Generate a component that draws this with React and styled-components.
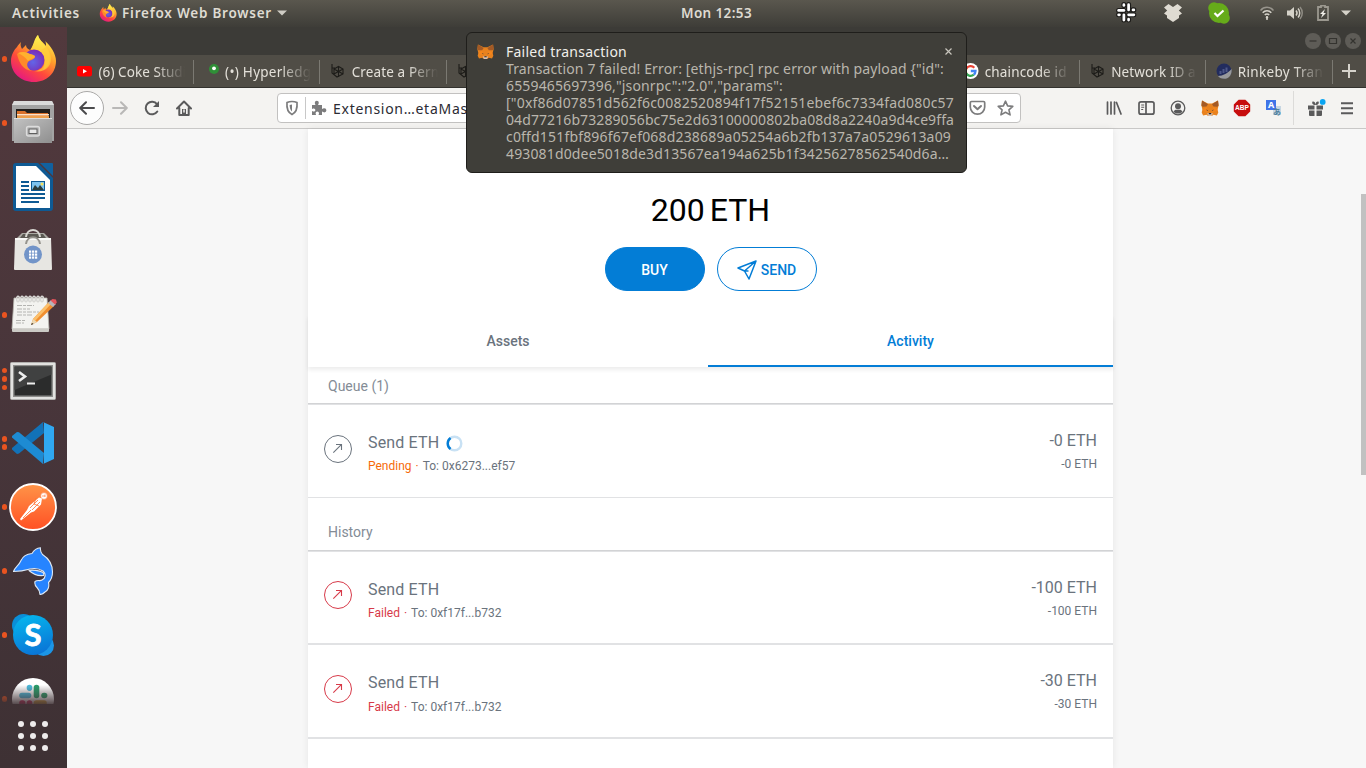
import React, { useLayoutEffect, useRef, useState } from "react";
import styled, { createGlobalStyle, css } from "styled-components";

const uiFont = '"Noto Sans", "Open Sans", sans-serif';
const appFont = 'Roboto, "Liberation Sans", sans-serif';

const GlobalStyle = createGlobalStyle`
  * { box-sizing: border-box; }
  body { margin: 0; overflow: hidden; background: #3c3b37; }
  svg { display: block; flex: none; }
`;

/* ---------- text tracked to a given line width ---------- */

const TrackedSpan = styled.span`
  display: inline-block;
  white-space: pre;
  flex: none;
`;

function Tracked({ width, children }) {
  const ref = useRef(null);
  const [spacing, setSpacing] = useState(0);
  useLayoutEffect(() => {
    const natural = ref.current.getBoundingClientRect().width;
    setSpacing((width - natural) / Array.from(children).length);
  }, [width, children]);
  return (
    <TrackedSpan ref={ref} style={{ letterSpacing: `${spacing}px` }}>
      {children}
    </TrackedSpan>
  );
}

/* ---------- desktop shell ---------- */

const Desktop = styled.div`
  position: relative;
  width: 1366px;
  height: 768px;
  overflow: hidden;
  display: flex;
  flex-direction: column;
  font-family: ${uiFont};
`;

const TopBar = styled.header`
  flex: none;
  height: 27px;
  display: grid;
  grid-template-columns: 1fr auto 1fr;
  align-items: center;
  padding: 0 0 2px 67px;
  background: linear-gradient(#5a574e, #3e3d38);
  color: #dfdbd2;
  font-size: 13.5px;
  font-weight: 600;
  line-height: 24px;
`;

const TopLeft = styled.div`
  display: flex;
  align-items: center;
  margin-left: -67px;
  padding-left: 12px;
`;

const AppMenu = styled.div`
  display: flex;
  align-items: center;
  margin-left: 19px;
  gap: 5px;
`;

const TopRight = styled.div`
  display: flex;
  align-items: center;
  justify-content: flex-end;
  padding-right: 15px;
`;

const TrayItem = styled.span`
  display: flex;
  margin-left: ${(p) => p.$gap}px;
`;

const Workspace = styled.div`
  flex: 1;
  min-height: 0;
  display: flex;
`;

/* ---------- dock ---------- */

const Dock = styled.nav`
  flex: none;
  width: 67px;
  display: flex;
  flex-direction: column;
  background: linear-gradient(#52393d, #47353a 55%, #3e3134);
`;

const DockList = styled.div`
  flex: none;
  height: 677px;
  overflow: hidden;
`;

const DockSlot = styled.div`
  height: 64px;
  display: grid;
  grid-template-columns: 9px 48px;
  align-items: center;
  ${(p) =>
    p.$fading &&
    css`
      mask-image: linear-gradient(#000 18px, rgba(0, 0, 0, 0.12) 37px);
    `}
`;

const Dots = styled.div`
  display: flex;
  flex-direction: column;
  align-items: center;
  gap: 2.8px;
`;

const Dot = styled.i`
  width: 5.6px;
  height: 5.6px;
  border-radius: 50%;
  background: #e95420;
`;

const AppsGrid = styled.div`
  display: grid;
  grid-template-columns: repeat(3, 6px);
  gap: 6px;
  padding: 17px 0 0 18px;
`;

const AppsDot = styled.i`
  width: 6px;
  height: 6px;
  border-radius: 50%;
  background: #eeecec;
`;

/* ---------- browser window ---------- */

const Browser = styled.main`
  flex: 1;
  min-width: 0;
  display: flex;
  flex-direction: column;
`;

const TitleBar = styled.div`
  flex: none;
  height: 28px;
  display: flex;
  justify-content: flex-end;
  align-items: center;
  gap: 4px;
  padding-right: 5px;
  background: #3c3b37;
`;

const WindowButton = styled.span`
  width: 16px;
  height: 16px;
  border-radius: 50%;
  background: #5e5c57;
  display: flex;
  align-items: center;
  justify-content: center;
`;

const TabStrip = styled.div`
  flex: none;
  height: 33px;
  display: flex;
  background: #504d46;
  border-bottom: 1px solid #33322e;
`;

const Tab = styled.div`
  flex: none;
  width: 126.6px;
  display: flex;
  align-items: center;
  padding-left: 10px;
  position: relative;
  &::after {
    content: "";
    position: absolute;
    right: 0;
    top: 5px;
    width: 1px;
    height: 24px;
    background: #7b7972;
  }
`;

const Favicon = styled.span`
  width: 16px;
  margin-right: 5.500px;
  display: flex;
  flex: none;
`;

const TabTitle = styled.span`
  width: 86px;
  padding-top: 2px;
  overflow: hidden;
  white-space: nowrap;
  font-size: 13.5px;
  line-height: 30px;
  color: #e3e0d9;
  mask-image: linear-gradient(90deg, #000 56px, transparent 86px);
`;

const NewTab = styled.div`
  flex: 1;
  display: flex;
  align-items: center;
  justify-content: center;
`;

const Toolbar = styled.div`
  flex: none;
  height: 41px;
  display: flex;
  align-items: center;
  background: #f4f3f1;
  border-bottom: 1px solid #c9c8c7;
  padding-left: 3px;
`;

const BackButton = styled.span`
  width: 34px;
  height: 34px;
  border: 1px solid #aaa9a8;
  border-radius: 50%;
  background: #fdfdfd;
  display: flex;
  align-items: center;
  justify-content: center;
`;

const NavIcon = styled.span`
  display: flex;
  margin-left: ${(p) => p.$gap}px;
`;

const UrlBar = styled.div`
  width: 744px;
  height: 30px;
  margin-left: 85px;
  display: flex;
  align-items: center;
  padding: 0 6px 0 6px;
  border: 1px solid #c2c1c0;
  border-radius: 4px;
  background: #fff;
  color: #2b2b33;
  font-size: 14px;
`;

const UrlDivider = styled.span`
  width: 1px;
  height: 22px;
  margin: 0 5px;
  background: #c8c8c8;
`;

const UrlText = styled.span`
  flex: 1;
  margin-left: 5px;
  display: flex;
`;

const ToolDivider = styled.span`
  width: 1px;
  height: 34px;
  margin-left: 10px;
  background: #dcdbd9;
`;

const Page = styled.div`
  flex: 1;
  min-height: 0;
  position: relative;
  display: flex;
  background: #f7f7f7;
  padding-left: 241px;
  font-family: ${appFont};
`;

const ScrollThumb = styled.div`
  position: absolute;
  right: 0;
  top: 65px;
  width: 5px;
  height: 281px;
  background: #c1c1c1;
`;

const Wallet = styled.section`
  width: 805px;
  background: #fff;
  box-shadow: 0 0 7px rgba(0, 0, 0, 0.08);
`;

const Balance = styled.div`
  padding-top: 61px;
  height: 101px;
  display: flex;
  justify-content: center;
  gap: 5px;
  font-size: 32px;
  line-height: 41px;
  color: #000;
`;

const Actions = styled.div`
  display: flex;
  justify-content: center;
  gap: 12px;
  margin-top: 17px;
  padding-left: 1px;
`;

const PillButton = styled.button`
  width: 100px;
  height: 44px;
  padding: 1px 1px 0 0;
  border-radius: 22px;
  border: 1px solid #037dd6;
  display: flex;
  align-items: center;
  justify-content: center;
  gap: 4px;
  font-family: ${appFont};
  font-size: 14px;
  font-weight: 500;
  background: ${(p) => (p.$primary ? "#037dd6" : "#fff")};
  color: ${(p) => (p.$primary ? "#fff" : "#037dd6")};
`;

const WalletTabs = styled.div`
  display: grid;
  grid-template-columns: 400px 405px;
  height: 52px;
  margin-top: 24px;
  box-shadow: 0 3px 4px rgba(0, 0, 0, 0.07);
`;

const WalletTab = styled.div`
  height: 52px;
  text-align: center;
  font-size: 14px;
  font-weight: 500;
  line-height: 52px;
  color: ${(p) => (p.$active ? "#037dd6" : "#6a737d")};
  border-bottom: 2px solid ${(p) => (p.$active ? "#037dd6" : "transparent")};
`;

const ListHeader = styled.div`
  height: ${(p) => p.$height}px;
  padding: 0 0 ${(p) => p.$bottom}px 20px;
  display: flex;
  align-items: flex-end;
  font-size: 14px;
  line-height: 18px;
  color: #848c96;
  border-bottom: 1px solid #d2d3d5;
`;

const TxRow = styled.div`
  height: ${(p) => p.$height}px;
  border-top: 1px solid #e1e2e4;
  border-bottom: 1px solid #e1e2e4;
  display: grid;
  grid-template-columns: 28px 1fr auto;
  column-gap: 16px;
  padding: 0 16px;
  color: #6a737d;
`;

const TxIcon = styled.span`
  margin-top: ${(p) => p.$top}px;
  width: 28px;
  height: 28px;
  color: ${(p) => (p.$failed ? "#d73a49" : "#6a737d")};
`;

const TxText = styled.div`
  padding-top: ${(p) => p.$top}px;
  text-align: ${(p) => (p.$right ? "right" : "left")};
`;

const TxTitle = styled.div`
  display: flex;
  align-items: center;
  justify-content: ${(p) => (p.$right ? "flex-end" : "flex-start")};
  gap: 7px;
  font-size: 16px;
  line-height: 20px;
  letter-spacing: ${(p) => (p.$right ? 0 : 0.15)}px;
`;

const TxSub = styled.div`
  margin-top: ${(p) => p.$top}px;
  font-size: 12px;
  line-height: 16px;
  white-space: pre;
`;

const Status = styled.span`
  color: ${(p) => (p.$failed ? "#d73a49" : "#f66a0a")};
`;

const StatusDot = styled.span`
  margin: 0 4px;
`;

/* ---------- notification ---------- */

const Notification = styled.aside`
  position: absolute;
  left: 466px;
  top: 32px;
  width: 501px;
  height: 141px;
  display: grid;
  grid-template-columns: 28px 1fr;
  padding: 10px 10px 0 10px;
  border: 1px solid #1f1e1b;
  border-radius: 6px;
  background: #3f3e39;
  font-size: 14px;
  line-height: 17px;
`;

const NoticeHead = styled.div`
  display: flex;
  justify-content: space-between;
  align-items: center;
  color: #f0eeea;
  padding-left: 1px;
  padding-right: 4px;
  height: 17px;
`;

const NoticeLine = styled.div`
  height: 17px;
  padding-left: 1px;
  color: #bab6ad;
  white-space: nowrap;
`;

/* ---------- shared drawings ---------- */

function FirefoxLogo({ size, id }) {
  return (
    <svg width={size} height={size} viewBox="0 0 48 48">
      <defs>
        <linearGradient id={id + "a"} x1="0.85" y1="0.05" x2="0.25" y2="1">
          <stop offset="0" stopColor="#fff44f" />
          <stop offset="0.35" stopColor="#ffa02b" />
          <stop offset="0.65" stopColor="#ff4a3b" />
          <stop offset="1" stopColor="#e31587" />
        </linearGradient>
        <linearGradient id={id + "b"} x1="0.6" y1="0" x2="0.5" y2="1">
          <stop offset="0" stopColor="#fff44f" />
          <stop offset="1" stopColor="#ffa52c" />
        </linearGradient>
        <radialGradient id={id + "c"} cx="0.45" cy="0.6" r="0.6">
          <stop offset="0" stopColor="#6266e8" />
          <stop offset="1" stopColor="#7b2bb5" />
        </radialGradient>
      </defs>
      <path d="M12 7c-1 3 0 5 1 7l4-4c0 3 2 4 4 5 6-7 4-11 8-15 1 5 5 7 8 11 0-2 0-4-1-5 6 5 11 13 11 20 0 12-9 21-22 21S2 38 2 26c0-6 3-11 6-14 1-2 3-4 4-5z" fill={`url(#${id}a)`} />
      <path d="M29 0c1 6 7 9 10 15 4 9 1 17-5 20 3-6 2-14-4-18-4-1-7-1-8-3 3-5 3-10 7-14z" fill={`url(#${id}b)`} />
      <circle cx="25" cy="25" r="10.5" fill={`url(#${id}c)`} />
      <path d="M8 19c4-3 9-2 12 0 3 1 6 1 6 3-1 3-5 3-7 5-2 3 0 7 4 9-9-1-13-8-15-17z" fill="#ff8a2a" />
      <path d="M9 18c5-2 9-1 12 1 3 1 5 1 5 3-2 2-5 2-7 4-3-4-6-6-10-8z" fill="#ffb12e" />
      <path d="M31 16c5 3 6 9 4 14-2 4-6 6-10 6 9 2 17-3 17-12 0-5-2-9-5-12z" fill="#ffc83a" opacity=".75" />
    </svg>
  );
}

function FoxLogo({ size }) {
  return (
    <svg width={size} height={size} viewBox="0 0 18 18">
      <path d="M1 1.500 7 4.600h4l6-3.100.6 5-1 4 .7 3-1.400 3-3.400-.8-1.600 1.300H7.100l-1.600-1.300-3.400.8-1.400-3 .7-3-1-4z" fill="#e8821e" />
      <path d="M1 1.500 7 5.200 5.500 7.600 1.600 7.800.400 6.500zM17 1.500l-6 3.700 1.500 2.400 3.900.2 1.200-1.300z" fill="#a35a26" />
      <path d="m5.500 8 1.400 5.500L3 12 1.400 10.500zM12.500 8l-1.400 5.500L15 12l1.600-1.500z" fill="#f6851b" />
      <path d="m5 10.500 1.800.8-.3.800zM13 10.500l-1.800.8.300.8z" fill="#2b3440" />
      <path d="M6 14.300h6l-1.500 2.600h-3z" fill="#d7c1b3" />
      <path d="M8 14h2l.4 1.200H7.600z" fill="#26262a" />
    </svg>
  );
}

function BlockFavicon() {
  return (
    <svg width="16" height="16" viewBox="0 0 16 16" fill="none" stroke="#1d1c19" strokeWidth="1.100">
      <path d="M2 1v9l5 4 6-3V6L8.500 3.500 4 6v5M4 6l4.500 2.500L13 6M8.500 8.500V14M2 5h3M4 11l4.500-2.500L13 11M8.500 3.500v5" />
    </svg>
  );
}

function Slashes({ size, outline }) {
  const c = outline ? ["#fff", "#fff", "#fff", "#fff"] : ["#36c5f0", "#2eb67d", "#e01e5a", "#ecb22e"];
  const shape = (extra, colors) => (
    <g strokeWidth={3.2 + extra} strokeLinecap="round">
      <path d="M2.500 8h5" stroke={colors[0]} />
      <path d="M7.500 2.500v.8" stroke={colors[0]} />
      <path d="M12 2.500v5" stroke={colors[1]} />
      <path d="M17 7.500h-.8" stroke={colors[1]} />
      <path d="M7.500 12.200v5" stroke={colors[2]} />
      <path d="M2.500 12.200h.8" stroke={colors[2]} />
      <path d="M12 12.200h5" stroke={colors[3]} />
      <path d="M12 17.200v-.8" stroke={colors[3]} />
    </g>
  );
  return (
    <svg width={size} height={size} viewBox="0 0 20 20" fill="none">
      {outline && shape(1.6, ["#1d1c1a", "#1d1c1a", "#1d1c1a", "#1d1c1a"])}
      {shape(outline ? -0.6 : 0, c)}
    </svg>
  );
}

/* ---------- dock icons ---------- */

const FilesIcon = () => (
  <svg width="48" height="48" viewBox="0 0 48 48">
    <defs>
      <linearGradient id="files" x1="0" y1="0" x2="1" y2="1">
        <stop offset="0" stopColor="#c2c2c2" />
        <stop offset="1" stopColor="#8f8f8f" />
      </linearGradient>
    </defs>
    <path d="M5 2h38l2 4v36H3V6z" fill="#a3a3a3" />
    <path d="M5 2h38l2 4H3z" fill="#dadada" />
    <path d="M7 10h34v10H7z" fill="#221f1d" />
    <path d="M8 12h8l2 2h21v6H8z" fill="#d9702b" />
    <path d="M8 15h32v1.500H8z" fill="#fbe3c8" />
    <path d="M8 17h32v3H8z" fill="#efa04c" />
    <path d="M5 19h38v25H5z" fill="url(#files)" />
    <path d="M5 19h38v1H5z" fill="#dedede" />
    <rect x="17.500" y="27.500" width="13" height="9.500" rx="2" fill="#b5b5b5" stroke="#dcdcdc" strokeWidth="1.300" />
    <rect x="20" y="30" width="8" height="4.500" fill="#e8e8e8" stroke="#5e5e5e" strokeWidth="1" />
  </svg>
);

const WriterIcon = () => (
  <svg width="48" height="48" viewBox="0 0 48 48">
    <path d="M7 0h22l15 15v30a3 3 0 0 1-3 3H7a3 3 0 0 1-3-3V3a3 3 0 0 1 3-3z" fill="#0e5a94" />
    <path d="M7 3h20l14 14v28H7z" fill="#fff" />
    <path d="M31 0h12a1 1 0 0 1 1 1v12z" fill="#11619f" />
    <path d="M12 19h8M12 23h8M12 27h8M12 31h24M12 35h24M12 39h18" stroke="#0e5a94" strokeWidth="2" />
    <path d="M22 18h14v10H22z" fill="#0e5a94" />
    <path d="M23 19h12v8H23z" fill="#7ec3ee" />
    <path d="m23 27 3-5 3 3 2-3 4 5z" fill="#2c3d3c" />
    <circle cx="33" cy="21" r="1.500" fill="#f7e05a" />
  </svg>
);

const SoftwareIcon = () => (
  <svg width="48" height="48" viewBox="0 0 48 48">
    <path d="m7 12 6-6h22l6 6z" fill="#aaa9a3" />
    <path d="m11 11 3-4h20l3 4z" fill="#5b5953" />
    <path d="M17 10c1-9.500 13-9.500 14 0" fill="none" stroke="#d9d8d3" strokeWidth="2" />
    <path d="M6 11h36l1 31a1 1 0 0 1-1 1H6a1 1 0 0 1-1-1z" fill="#e7e6e2" />
    <path d="M6 11h36v2H6z" fill="#fafaf8" />
    <path d="M17 17c1-9 13-9 14 0" fill="none" stroke="#95938d" strokeWidth="2" />
    <circle cx="24" cy="27.500" r="9" fill="#7294c8" />
    <g fill="#fff">
      {[20, 23, 26].map((x) => [23.500, 26.500, 29.500].map((y) => <rect key={`${x}-${y}`} x={x} y={y} width="2.200" height="2.200" />))}
    </g>
  </svg>
);

const NotesIcon = () => (
  <svg width="48" height="48" viewBox="0 0 48 48">
    <path d="M5 7h33l2 31H3z" fill="#f3f3f0" stroke="#b8b7b0" strokeWidth=".8" />
    <path d="M3 37.500h37V40a1 1 0 0 1-1 1H4a1 1 0 0 1-1-1z" fill="#cbcac5" />
    <g fill="none" stroke="#d8d8d5" strokeWidth="1.500">
      {[9, 13, 17, 21, 25, 29, 33].map((x) => (
        <ellipse key={x} cx={x} cy="8" rx="1.400" ry="2.700" />
      ))}
    </g>
    <path d="M8 14.500h17M8 18h13M8 21h22M8 24h15M7 29.500h10M7 32h8" stroke="#b4b4b1" strokeDasharray="5 1 3 1" />
    <path d="m22 34 2-6L40 11l5 4-17 16z" fill="#f08e2f" />
    <path d="m24 28 16-17 2 2-16 17z" fill="#fbc06c" />
    <path d="m22 34 2-6 4 3z" fill="#ecd9b4" />
    <path d="m22 34 1-2 1.500 1z" fill="#222" />
    <path d="m39 12 3-3 5 4-3 3z" fill="#b5b5bb" />
    <path d="m41.500 9.500 2-1.500 3.500.5.800 3-1.800 2z" fill="#e5555c" />
  </svg>
);

const TerminalIcon = () => (
  <svg width="48" height="48" viewBox="0 0 48 48">
    <rect x="1.500" y="7.500" width="45" height="37" rx="1" fill="#e2e2e0" stroke="#b1b0ae" />
    <rect x="4" y="10" width="40" height="32" fill="#8c8c8a" />
    <rect x="5.500" y="11.500" width="37" height="29" fill="#2b2c2c" />
    <path d="M5.500 11.500h37v8L5.500 35z" fill="#404141" />
    <path d="m10 17 6 4.500-6 4.500" fill="none" stroke="#eee" strokeWidth="2.600" />
    <path d="M18 28.500h8" stroke="#eee" strokeWidth="2" />
  </svg>
);

const CodeIcon = () => (
  <svg width="48" height="48" viewBox="0 0 48 48">
    <path d="m34 3 1 11L10 34.500 8 35l-5-4.500V29z" fill="#1272b8" />
    <path d="M34 45 3 18.500V17l5-4 2 .2L35 34z" fill="#1d8bd3" />
    <path d="M34 3 45 8v32l-11 5c1-.5 1-1 1-2V5c0-1 0-1.500-1-2z" fill="#30a8f1" />
  </svg>
);

const PostmanIcon = () => (
  <svg width="48" height="48" viewBox="0 0 48 48">
    <defs>
      <linearGradient id="pm" x1="0" y1="0" x2="0" y2="1">
        <stop offset="0" stopColor="#ff9448" />
        <stop offset="1" stopColor="#ff5024" />
      </linearGradient>
    </defs>
    <circle cx="24" cy="24" r="23" fill="url(#pm)" stroke="#fff" strokeWidth="1.800" />
    <circle cx="35" cy="13" r="3.400" fill="#fff" stroke="#ff7336" strokeWidth=".6" />
    <path d="M30 14.500 20 23l-2 4-7 9 1 1.500 10-8 3-1 7-7 1-6z" fill="#fff" />
    <path d="m29 17-8 8m10-6-8 8M14 35l8-8M27 15l-2 6 5 2" fill="none" stroke="#ff7336" strokeWidth=".8" />
    <path d="M36 11.500v2.500M33 13h3" stroke="#ff7336" strokeWidth=".7" />
  </svg>
);

const DolphinIcon = () => (
  <svg width="48" height="48" viewBox="0 0 48 48">
    <g fill="#2684ff" stroke="#dce8f5" strokeWidth="1.100" strokeLinejoin="round">
      <path d="M20 23.500c3-1 10 0 14 2 1 1.500 1 3 .5 3-4 .5-10-1-14.500-5z" />
      <path d="M4.500 24.500C6 20 10 18.500 12 13.500 14 9 18 7 23 6.500 25 3 28 1 31.500.7 31 3 32 5.500 33.500 7.500 39 11 43.500 17 43.500 25c0 4-1 7.500-4 10.500 1 4-.5 8-3.500 9.500-1.500 1.500-3 2.500-5 2.500 0-3-1-5-3-7-2-2-2.500-4-2-6 3-2 5 0 7-1.500 4-2 4-6 1-9-4-2.500-8-3-13-2-5 1.500-11 2.500-16.500 2.500z" />
    </g>
  </svg>
);

const SkypeGlyph = styled.text`
  font: 700 31px Lato, "Noto Sans", sans-serif;
  fill: #fff;
  text-anchor: middle;
`;

const SkypeIcon = () => (
  <svg width="48" height="48" viewBox="0 0 48 48">
    <defs>
      <linearGradient id="sk" x1="0.3" y1="0" x2="0.6" y2="1">
        <stop offset="0" stopColor="#05b5ed" />
        <stop offset="1" stopColor="#0a74d6" />
      </linearGradient>
    </defs>
    <circle cx="14.500" cy="14.500" r="11.500" fill="#0a8fd8" />
    <circle cx="34.500" cy="34.500" r="10.500" fill="#1b95e6" />
    <circle cx="24" cy="24" r="20" fill="url(#sk)" />
    <SkypeGlyph x="24" y="35" stroke="#fff" strokeWidth="0.800">S</SkypeGlyph>
  </svg>
);

const SlackDockIcon = () => (
  <svg width="48" height="48" viewBox="0 0 48 48">
    <circle cx="24" cy="24" r="21" fill="#fff" />
    <g strokeWidth="5.600" strokeLinecap="round">
      <path d="M13 20.500h6.500" stroke="#4dbbdc" />
      <path d="M20.500 12.500v.6" stroke="#4dbbdc" />
      <path d="M27.500 12.500v8" stroke="#2a9f6c" />
      <path d="M35 20.500h.6" stroke="#2a9f6c" />
      <path d="M20.500 28v8M13 28h.6" stroke="#d8235f" />
      <path d="M27.500 28H35M27.500 36v.6" stroke="#e2ab32" />
    </g>
  </svg>
);

const dockItems = [
  { key: "firefox", dots: 1, icon: <FirefoxLogo size={48} id="ffd" /> },
  { key: "files", dots: 1, icon: <FilesIcon /> },
  { key: "writer", dots: 0, icon: <WriterIcon /> },
  { key: "software", dots: 0, icon: <SoftwareIcon /> },
  { key: "notes", dots: 1, icon: <NotesIcon /> },
  { key: "terminal", dots: 3, icon: <TerminalIcon /> },
  { key: "code", dots: 2, icon: <CodeIcon /> },
  { key: "postman", dots: 1, icon: <PostmanIcon /> },
  { key: "dolphin", dots: 1, icon: <DolphinIcon /> },
  { key: "skype", dots: 1, icon: <SkypeIcon /> },
  { key: "slack", dots: 1, icon: <SlackDockIcon />, fading: true },
];

/* ---------- browser tabs ---------- */

const YoutubeFavicon = () => (
  <svg width="16" height="16" viewBox="0 0 16 16">
    <rect x="0" y="3" width="15" height="10.500" rx="2.500" fill="#f00" />
    <path d="m6 6 4 2.200-4 2.200z" fill="#fff" />
  </svg>
);

const PinFavicon = () => (
  <svg width="16" height="16" viewBox="0 0 16 16">
    <circle cx="10" cy="6" r="5" fill="#2f8f37" />
    <circle cx="10" cy="5.300" r="1.900" fill="#fff" />
  </svg>
);

const GoogleFavicon = () => (
  <svg width="16" height="16" viewBox="0 0 16 16">
    <circle cx="7.500" cy="8" r="8" fill="#fff" />
    <g fill="none" strokeWidth="2.300">
      <path d="M11.300 4.700A5 5 0 0 0 3.300 5.600" stroke="#ea4335" />
      <path d="M3.300 5.600a5 5 0 0 0 0 4.800" stroke="#fbbc05" />
      <path d="M3.300 10.400a5 5 0 0 0 7.500 1.300" stroke="#34a853" />
      <path d="M10.800 11.700A5 5 0 0 0 12.500 8H7.800" stroke="#4285f4" />
    </g>
  </svg>
);

const EtherscanFavicon = () => (
  <svg width="16" height="16" viewBox="0 0 16 16">
    <circle cx="8" cy="8" r="7.500" fill="#222c5e" />
    <path d="M4.500 11V8M7.500 10V6M10.500 9V4.500" stroke="#4d5788" strokeWidth="2" />
    <path d="M2 13c5 0 10-3 13.500-7C16.500 11 13 16 8 15.800 5 15.800 3 14.500 2 13z" fill="#98999c" />
  </svg>
);

const tabs = [
  { title: "(6) Coke Studio", width: 96, icon: <YoutubeFavicon /> },
  { title: "(•) Hyperledger", width: 100, icon: <PinFavicon /> },
  { title: "Create a Permis", width: 102, icon: <BlockFavicon /> },
  { title: "", width: 0, icon: <BlockFavicon /> },
  { title: "", width: 0 },
  { title: "", width: 0 },
  { title: "", width: 0 },
  { title: "chaincode id", width: 82, icon: <GoogleFavicon /> },
  { title: "Network ID an", width: 93, icon: <BlockFavicon /> },
  { title: "Rinkeby Trans", width: 92, icon: <EtherscanFavicon /> },
];

const noticeLines = [
  ['Transaction 7 failed! Error: [ethjs-rpc] rpc error with payload {"id":', 438],
  ['6559465697396,"jsonrpc":"2.0","params":', 277],
  ['["0xf86d07851d562f6c0082520894f17f52151ebef6c7334fad080c57', 448],
  ["04d77216b73289056bc75e2d63100000802ba08d8a2240a9d4ce9ffa", 448],
  ["c0ffd151fbf896f67ef068d238689a05254a6b2fb137a7a0529613a09", 445],
  ["493081d0dee5018de3d13567ea194a625b1f34256278562540d6a…", 443],
];

const AbpText = styled.text`
  font: 700 6.6px "Liberation Sans", sans-serif;
  fill: #fff;
  text-anchor: middle;
`;

const TranslateText = styled.text`
  font: 700 ${(p) => p.$size}px "Noto Sans", "Noto Sans CJK JP", sans-serif;
  fill: ${(p) => p.$fill};
  text-anchor: middle;
`;

function Transaction({ failed, target, amount, height, iconTop, subTop }) {
  return (
    <TxRow $height={height}>
      <TxIcon $top={iconTop} $failed={failed}>
        <svg width="28" height="28" viewBox="0 0 28 28" fill="none" stroke="currentColor">
          <circle cx="14" cy="14" r="13.500" />
          <path d="m9.300 17.700 8-8M12 9.500h5.500V15" strokeWidth="1.100" />
        </svg>
      </TxIcon>
      <TxText $top={28}>
        <TxTitle>
          Send ETH
          {!failed && (
            <svg width="17" height="17" viewBox="0 0 17 17" fill="none" strokeWidth="2.400">
              <circle cx="8.500" cy="8.500" r="6.800" stroke="#c8e1f4" />
              <path d="M4.600 14A6.800 6.800 0 0 1 4.600 2.900" stroke="#037dd6" />
            </svg>
          )}
        </TxTitle>
        <TxSub $top={subTop}>
          <Status $failed={failed}>
            {failed ? "Failed" : "Pending"}
            <StatusDot>·</StatusDot>
          </Status>
          To: {target}
        </TxSub>
      </TxText>
      <TxText $top={26} $right>
        <TxTitle $right>{amount}</TxTitle>
        <TxSub $top={5}>{amount}</TxSub>
      </TxText>
    </TxRow>
  );
}

export default function App() {
  return (
    <Desktop>
      <GlobalStyle />
      <TopBar>
        <TopLeft>
          <Tracked width={68}>Activities</Tracked>
          <AppMenu>
            <FirefoxLogo size={18} id="fft" />
            <Tracked width={150}>Firefox Web Browser</Tracked>
            <svg width="10" height="6" viewBox="0 0 10 6">
              <path d="M0 .5h10L5 5.500z" fill="#cfccc4" />
            </svg>
          </AppMenu>
        </TopLeft>
        <Tracked width={71}>Mon 12:53</Tracked>
        <TopRight>
          <TrayItem $gap={0}>
            <Slashes size={21} outline />
          </TrayItem>
          <TrayItem $gap={26}>
            <svg width="20" height="18" viewBox="0 0 20 18" fill="#dfdbd2">
              <path d="m5.500 0 4.500 3 4.500-3L19 3.500 15.800 6.500 19 9.500l-3 2V14l-6 4-6-4v-2.500l-3-2 3.200-3L1 3.500z" />
            </svg>
          </TrayItem>
          <TrayItem $gap={25}>
            <svg width="22" height="22" viewBox="0 0 22 22">
              <circle cx="11" cy="11" r="10" fill="#66ab1a" />
              <circle cx="6" cy="6" r="5.800" fill="#66ab1a" />
              <circle cx="16" cy="16" r="5.800" fill="#66ab1a" />
              <path d="m6.500 11 3 3 6-5.500" fill="none" stroke="#fff" strokeWidth="2.200" />
            </svg>
          </TrayItem>
          <TrayItem $gap={30}>
            <svg width="14" height="14" viewBox="0 0 14 14" fill="none" stroke="#d5d2c9" strokeWidth="1.500">
              <path d="M.5 4.500C4 .3 10 .3 13.500 4.500" stroke="#97948c" />
              <path d="M2.700 6.700c2.300-2.600 6.300-2.600 8.600 0" />
              <path d="M4.800 9c1.200-1.300 3.200-1.300 4.400 0" />
              <circle cx="7" cy="11.500" r="1.200" fill="#d5d2c9" stroke="none" />
              <path d="M7 10v4" />
            </svg>
          </TrayItem>
          <TrayItem $gap={13}>
            <svg width="16" height="14" viewBox="0 0 16 14" fill="none" stroke="#d5d2c9" strokeWidth="1.500">
              <path d="M0 4.500h3L7 1v12L3 9.500H0z" fill="#d5d2c9" stroke="none" />
              <path d="M9 4.500c1.200 1.400 1.200 3.600 0 5M11 2.500c2.300 2.500 2.300 6.500 0 9" />
              <path d="M13 1c3 3.500 3 8.500 0 12" stroke="#8f8c84" />
            </svg>
          </TrayItem>
          <TrayItem $gap={14}>
            <svg width="12" height="16" viewBox="0 0 12 16">
              <path d="M4 .5h4V2h3v13H1V2h3z" fill="none" stroke="#9b988f" strokeWidth="1.800" />
              <path d="M8 4 3 9h2.500L4 13l5-5H6.500z" fill="#f0eee8" />
            </svg>
          </TrayItem>
          <TrayItem $gap={12}>
            <svg width="10" height="6" viewBox="0 0 10 6">
              <path d="M0 .5h10L5 5.500z" fill="#d5d2c9" />
            </svg>
          </TrayItem>
        </TopRight>
      </TopBar>

      <Workspace>
        <Dock>
          <DockList>
            {dockItems.map((item) => (
              <DockSlot key={item.key} $fading={item.fading}>
                <Dots>
                  {Array.from({ length: item.dots }, (_, i) => (
                    <Dot key={i} />
                  ))}
                </Dots>
                {item.icon}
              </DockSlot>
            ))}
          </DockList>
          <AppsGrid>
            {Array.from({ length: 9 }, (_, i) => (
              <AppsDot key={i} />
            ))}
          </AppsGrid>
        </Dock>

        <Browser>
          <TitleBar>
            {["M4.500 8h7", "M4.500 5.500h7v5h-7z", "m5.500 5.500 5 5m0-5-5 5"].map((d) => (
              <WindowButton key={d}>
                <svg width="16" height="16" viewBox="0 0 16 16" fill="none" stroke="#34332f" strokeWidth="1.200">
                  <path d={d} />
                </svg>
              </WindowButton>
            ))}
          </TitleBar>
          <TabStrip>
            {tabs.map((tab, i) => (
              <Tab key={i}>
                <Favicon>{tab.icon}</Favicon>
                {tab.title && (
                  <TabTitle>
                    <Tracked width={tab.width}>{tab.title}</Tracked>
                  </TabTitle>
                )}
              </Tab>
            ))}
            <NewTab>
              <svg width="14" height="14" viewBox="0 0 14 14" stroke="#d5d2cb" strokeWidth="2">
                <path d="M7 0v14M0 7h14" />
              </svg>
            </NewTab>
          </TabStrip>

          <Toolbar>
            <BackButton>
              <svg width="16" height="16" viewBox="0 0 16 16" fill="none" stroke="#4b4b4d" strokeWidth="2" strokeLinecap="round" strokeLinejoin="round">
                <path d="M15 8H1.500M7 2.200 1.200 8 7 13.800" />
              </svg>
            </BackButton>
            <NavIcon $gap={8}>
              <svg width="16" height="16" viewBox="0 0 16 16" fill="none" stroke="#b9b8b7" strokeWidth="2" strokeLinecap="round" strokeLinejoin="round">
                <path d="M1 8h13.500M9 2.200 14.800 8 9 13.800" />
              </svg>
            </NavIcon>
            <NavIcon $gap={16}>
              <svg width="16" height="16" viewBox="0 0 16 16" fill="none" stroke="#5a5a5b" strokeWidth="2" strokeLinecap="round">
                <path d="M13.300 11.500A6.300 6.300 0 1 1 13 4.200" />
                <path d="M15 1v6H9z" fill="#5a5a5b" stroke="none" />
              </svg>
            </NavIcon>
            <NavIcon $gap={16}>
              <svg width="16" height="16" viewBox="0 0 16 16" fill="none" stroke="#5a5a5b" strokeWidth="2" strokeLinecap="round" strokeLinejoin="round">
                <path d="M1 8.500 8 1.500l7 7M3.300 8v7h9.400V8" />
                <path d="M6 9h4v6H6z" fill="#5a5a5b" stroke="none" />
                <path d="M8 10v2" stroke="#f4f3f1" strokeWidth="1.500" />
              </svg>
            </NavIcon>
            <UrlBar>
              <svg width="16" height="16" viewBox="0 0 16 16" fill="none" stroke="#7c7c7d" strokeWidth="1.700">
                <path d="M8 1.500c2 0 3.500.3 5 1C13.500 8 12 12.500 8 14.500 4 12.500 2.500 8 3 2.500c1.500-.7 3-1 5-1z" />
                <path d="M8 4.500v7C6.300 10 5.600 7.500 5.600 5z" fill="#7c7c7d" stroke="none" />
              </svg>
              <UrlDivider />
              <svg width="17" height="16" viewBox="0 0 17 16" fill="#7c7c7d">
                <path d="M1 5h3.500C4 4 3.800 3.500 3.800 2.700a2 2 0 0 1 4 0C7.800 3.500 7.500 4 7 5h4v4c1-.5 1.500-.8 2.300-.8a2 2 0 0 1 0 4.200c-.8 0-1.300-.3-2.300-.8V15H7.500c.3-.8.5-1.200.5-1.700a1.700 1.700 0 0 0-3.400 0c0 .5.200.9.500 1.700H1v-4c1 .4 1.300.6 1.800.6a1.600 1.600 0 0 0 0-3.200C2.300 8.400 2 8.500 1 9z" />
              </svg>
              <UrlText>
                <Tracked width={148}>Extension…etaMask)</Tracked>
              </UrlText>
              <NavIcon $gap={0}>
                <svg width="17" height="16" viewBox="0 0 17 16" fill="none" stroke="#7c7c7d" strokeWidth="1.700" strokeLinecap="round" strokeLinejoin="round">
                  <path d="M2.500 1.500h12a1.200 1.200 0 0 1 1.200 1.200V7a7.200 7.200 0 0 1-14.400 0V2.700a1.200 1.200 0 0 1 1.200-1.200z" />
                  <path d="m5 6 3.500 3.300L12 6" strokeWidth="2" />
                </svg>
              </NavIcon>
              <NavIcon $gap={11}>
                <svg width="17" height="17" viewBox="0 0 17 17" fill="none" stroke="#7c7c7d" strokeWidth="1.600" strokeLinejoin="round">
                  <path d="m8.500 1.200 2.100 4.700 5.200.5-3.900 3.400 1.200 5.100-4.600-2.700-4.600 2.700 1.200-5.100L1.200 6.400l5.200-.5z" />
                </svg>
              </NavIcon>
            </UrlBar>
            <NavIcon $gap={85}>
              <svg width="16" height="16" viewBox="0 0 16 16" stroke="#5a5a5b" strokeWidth="1.700" strokeLinecap="round">
                <path d="M1.500 2v12M5 2v12M8.500 2v12M10.500 2.500l4.500 11.500" />
              </svg>
            </NavIcon>
            <NavIcon $gap={16}>
              <svg width="17" height="16" viewBox="0 0 17 16" fill="none" stroke="#5a5a5b" strokeWidth="1.700">
                <rect x="1" y="1.800" width="15" height="12.400" rx="2" />
                <path d="M8 2v12" />
                <path d="M3.200 5h3M3.200 7.300h3M3.200 9.500h2" strokeWidth="1.100" />
              </svg>
            </NavIcon>
            <NavIcon $gap={15}>
              <svg width="16" height="16" viewBox="0 0 16 16" fill="none" stroke="#5a5a5b">
                <circle cx="8" cy="8" r="6.800" strokeWidth="1.300" />
                <circle cx="8" cy="6.300" r="3" fill="#5a5a5b" stroke="none" />
                <path d="M3.500 11.500c1-1.500 2-1.800 3-1.800h3c1 0 2 .3 3 1.800-2 2.800-7 2.800-9 0z" fill="#5a5a5b" stroke="none" />
              </svg>
            </NavIcon>
            <NavIcon $gap={15}>
              <FoxLogo size={18} />
            </NavIcon>
            <NavIcon $gap={14}>
              <svg width="18" height="18" viewBox="0 0 18 18">
                <path d="M5.600.8h6.800l4.800 4.800v6.800l-4.800 4.800H5.600L.8 12.400V5.600z" fill="#c70d0d" />
                <AbpText x="9" y="11.400">ABP</AbpText>
              </svg>
            </NavIcon>
            <NavIcon $gap={14}>
              <svg width="18" height="18" viewBox="0 0 18 18">
                <path d="M8 7h8v9H8z" fill="#c7d6e2" />
                <path d="M1 1h10v10H1z" fill="#3f74e8" />
                <TranslateText x="6" y="9.300" $size={9} $fill="#fff">A</TranslateText>
                <TranslateText x="12" y="15.500" $size={8} $fill="#4e7f9d">あ</TranslateText>
              </svg>
            </NavIcon>
            <ToolDivider />
            <NavIcon $gap={13}>
              <svg width="19" height="18" viewBox="0 0 19 18" fill="#5a5a5b">
                <path d="M1 6.500h6.500v4H1zM9.500 6.500H16v4H9.500zM2 11.500h5.500V17H3a1 1 0 0 1-1-1zM9.500 11.500H15V16a1 1 0 0 1-1 1H9.500z" />
                <path d="M8.500 6C6 6 4.500 4.500 5.500 2.500 7.500 2 8.500 4 8.500 6c0-2 1-4 3-3.500C12.500 4.500 11 6 8.500 6z" />
                <circle cx="15.700" cy="2.900" r="2.900" fill="#0aa5f2" />
              </svg>
            </NavIcon>
            <NavIcon $gap={14}>
              <svg width="14" height="16" viewBox="0 0 14 16" stroke="#5a5a5b" strokeWidth="2">
                <path d="M1 3.200h12M1 8.200h12M1 13.200h12" />
              </svg>
            </NavIcon>
          </Toolbar>

          <Page>
            <Wallet>
              <Balance>
                <span>200</span>
                <span>ETH</span>
              </Balance>
              <Actions>
                <PillButton $primary>BUY</PillButton>
                <PillButton>
                  <svg width="20" height="20" viewBox="0 0 20 20" fill="none" stroke="#037dd6" strokeWidth="1.500" strokeLinejoin="round">
                    <path d="M19 1 1 8l6.500 3L19 1zM19 1l-7 18-4.500-8zM7.500 11l4 0" />
                  </svg>
                  SEND
                </PillButton>
              </Actions>
              <WalletTabs>
                <WalletTab>Assets</WalletTab>
                <WalletTab $active>Activity</WalletTab>
              </WalletTabs>
              <ListHeader $height={37} $bottom={8}>Queue (1)</ListHeader>
              <Transaction target="0x6273...ef57" amount="-0 ETH" height={94} iconTop={30} subTop={5} />
              <ListHeader $height={53} $bottom={9}>History</ListHeader>
              <Transaction failed target="0xf17f...b732" amount="-100 ETH" height={93} iconTop={29} subTop={5} />
              <Transaction failed target="0xf17f...b732" amount="-30 ETH" height={94} iconTop={30} subTop={6} />
              <TxRow $height={60} />
            </Wallet>
            <ScrollThumb />
          </Page>
        </Browser>
      </Workspace>

      <Notification>
        <FoxLogo size={17} />
        <div>
          <NoticeHead>
            <Tracked width={121}>Failed transaction</Tracked>
            <svg width="7" height="7" viewBox="0 0 7 7" stroke="#c9c6be" strokeWidth="1.200">
              <path d="m.5.5 6 6m0-6-6 6" />
            </svg>
          </NoticeHead>
          {noticeLines.map(([text, width]) => (
            <NoticeLine key={text}>
              <Tracked width={width}>{text}</Tracked>
            </NoticeLine>
          ))}
        </div>
      </Notification>
    </Desktop>
  );
}
